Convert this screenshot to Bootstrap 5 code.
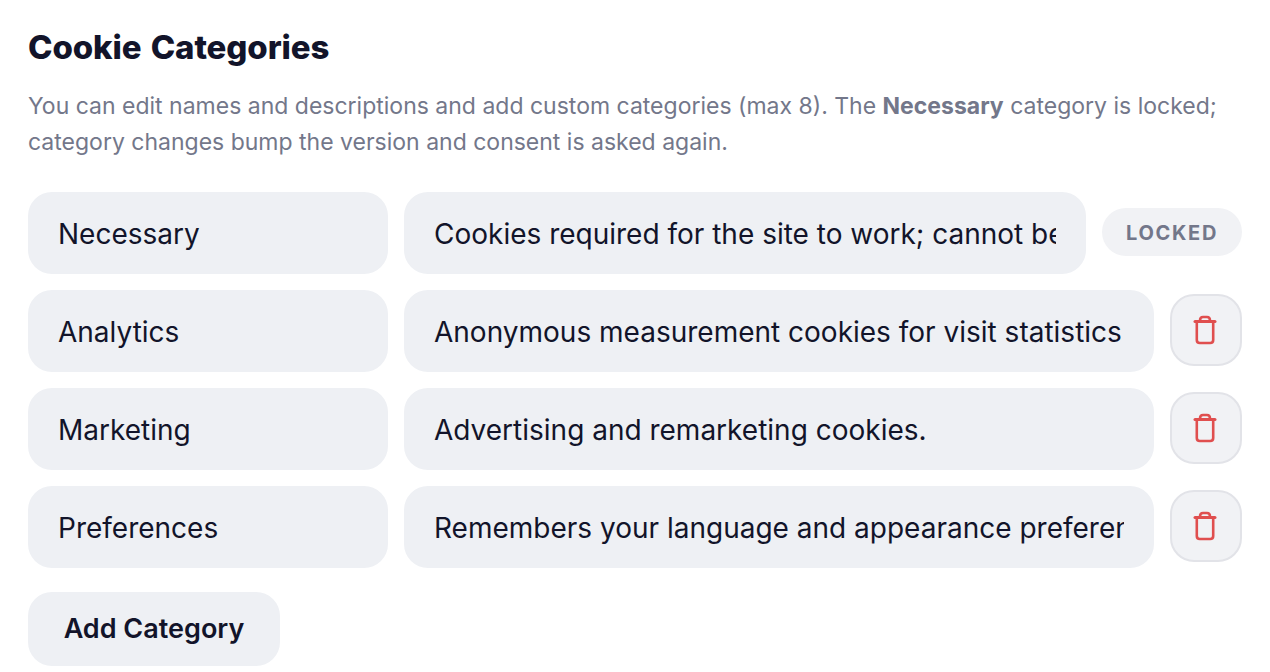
<!doctype html>
<html lang="en">
<head>
<meta charset="utf-8">
<title>Cookie Categories</title>
<link href="https://cdn.jsdelivr.net/npm/bootstrap@5.3.0/dist/css/bootstrap.min.css" rel="stylesheet">
<style>
html,body{height:100%;overflow:hidden;background:#fff}
body{font-family:Inter,"Liberation Sans",sans-serif;color:#12142a}
.page-wrap{padding:26px 28px 0}
.sec-title{font-size:33px;line-height:42px;font-weight:800;color:#12142a;margin:0 0 20px;letter-spacing:-.1px;word-spacing:2px}
.sec-help{font-size:23px;line-height:36px;color:#73778a;margin:0 0 32px}
.sec-help strong{font-weight:700}
.cat-row{height:82px;margin-bottom:16px;gap:16px}
.cat-input.form-control{height:82px;border:0;border-radius:24px;background:#eef0f4;color:#12142a;font-size:28px;line-height:36px;padding:2px 30px 0;box-shadow:none}
.cat-name{flex:0 0 360px;width:360px}
.cat-desc{flex:1 1 0;min-width:0}
.lock-pill{flex:0 0 140px;height:48px;margin-bottom:2px;padding-top:2px;border-radius:24px;background:#f1f2f5;color:#73778a;font-size:20px;font-weight:700;letter-spacing:1.7px}
.del-btn.btn{flex:0 0 72px;width:72px;height:72px;margin-bottom:2px;padding:0 2px 0 0;border:2px solid #e2e3e8;border-radius:24px;background:#f1f2f5}
.add-btn.btn{width:252px;height:74px;margin-top:8px;padding:0;border:0;border-radius:24px;background:#eef0f4;color:#12142a;font-size:27px;font-weight:600}
</style>
</head>
<body>
<div class="page-wrap">
<h2 class="sec-title">Cookie Categories</h2>
<p class="sec-help">You can edit names and descriptions and add custom categories (max 8). The <strong>Necessary</strong> category is locked; category changes bump the version and consent is asked again.</p>
<div class="d-flex align-items-center cat-row">
<input class="form-control cat-input cat-name" value="Necessary">
<input class="form-control cat-input cat-desc" value="Cookies required for the site to work; cannot be disabled.">
<span class="lock-pill d-flex align-items-center justify-content-center">LOCKED</span>
</div>
<div class="d-flex align-items-center cat-row">
<input class="form-control cat-input cat-name" value="Analytics">
<input class="form-control cat-input cat-desc" value="Anonymous measurement cookies for visit statistics">
<button class="btn del-btn d-flex align-items-center justify-content-center" aria-label="Delete"><svg width="24" height="30" viewBox="0 0 24 30" fill="none" stroke="#e04f4f" stroke-width="2.6" stroke-linecap="round" stroke-linejoin="round"><path stroke-width="3" d="M2 6.500h20"/><path d="M7 5.500q0-3.500 3-3.500h4q3 0 3 3.500"/><path d="M3.800 7V25q0 3 3 3h10.400q3 0 3-3V7"/></svg></button>
</div>
<div class="d-flex align-items-center cat-row">
<input class="form-control cat-input cat-name" value="Marketing">
<input class="form-control cat-input cat-desc" value="Advertising and remarketing cookies.">
<button class="btn del-btn d-flex align-items-center justify-content-center" aria-label="Delete"><svg width="24" height="30" viewBox="0 0 24 30" fill="none" stroke="#e04f4f" stroke-width="2.6" stroke-linecap="round" stroke-linejoin="round"><path stroke-width="3" d="M2 6.500h20"/><path d="M7 5.500q0-3.500 3-3.500h4q3 0 3 3.500"/><path d="M3.800 7V25q0 3 3 3h10.400q3 0 3-3V7"/></svg></button>
</div>
<div class="d-flex align-items-center cat-row">
<input class="form-control cat-input cat-name" value="Preferences">
<input class="form-control cat-input cat-desc" value="Remembers your language and appearance preferences.">
<button class="btn del-btn d-flex align-items-center justify-content-center" aria-label="Delete"><svg width="24" height="30" viewBox="0 0 24 30" fill="none" stroke="#e04f4f" stroke-width="2.6" stroke-linecap="round" stroke-linejoin="round"><path stroke-width="3" d="M2 6.500h20"/><path d="M7 5.500q0-3.500 3-3.500h4q3 0 3 3.500"/><path d="M3.800 7V25q0 3 3 3h10.400q3 0 3-3V7"/></svg></button>
</div>
<button class="btn add-btn">Add Category</button>
</div>
<script src="https://cdn.jsdelivr.net/npm/bootstrap@5.3.0/dist/js/bootstrap.bundle.min.js"></script>
</body>
</html>
